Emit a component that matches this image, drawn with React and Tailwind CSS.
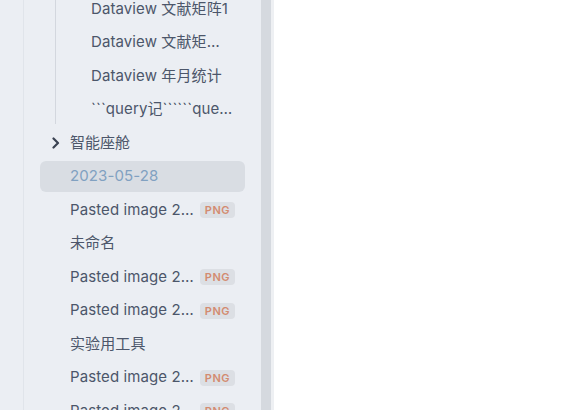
import React from "react";

const font = { fontFamily: "Inter, 'Noto Sans CJK SC', sans-serif" };

function Badge() {
  return (
    <span className="ml-[6px] shrink-0 rounded-[4px] bg-[#dcdfe4] px-[5px] text-[11px] font-semibold leading-[16px] tracking-[0.5px] text-[#d38b70]">
      PNG
    </span>
  );
}

function Row({ children, indent = "pl-[30px] pr-[10px]", selected = false, color = "text-[#4c566a]", badge = false }) {
  return (
    <div
      className={`flex h-[31px] items-center rounded-[6px] ${indent} ${selected ? "bg-[#d9dde3]" : ""}`}
    >
      <span className={`min-w-0 truncate text-[15px] tracking-[0.1px] ${color}`}>{children}</span>
      {badge && <Badge />}
    </div>
  );
}

export default function App() {
  return (
    <div className="flex h-[410px] w-[561px] overflow-hidden bg-white" style={font}>
      <div className="w-[24px] shrink-0 border-r border-[#e0e4ea] bg-[#ebeef3]" />
      <div className="relative w-[237px] shrink-0 bg-[#ebeef3] pl-[16px] pr-[16px]">
        <div className="-mt-[6.5px] flex flex-col gap-[2.5px]">
          <div className="relative flex flex-col gap-[2.5px]">
            <div className="absolute left-[15px] top-0 h-[130px] w-px bg-[#d3d7de]" />
            <Row indent="pl-[51px] pr-[12px]">Dataview 文献矩阵1</Row>
            <Row indent="pl-[51px] pr-[12px]">Dataview 文献矩阵2 示例</Row>
            <Row indent="pl-[51px] pr-[12px]">Dataview 年月统计</Row>
            <Row indent="pl-[51px] pr-[12px]">```query记``````query记录</Row>
          </div>
          <div className="flex h-[31px] items-center pl-[11px] pr-[10px]">
            <svg width="10" height="12" viewBox="0 0 10 12" className="mr-[9px] shrink-0">
              <path d="M2.5 1.5 L7 6 L2.5 10.5" fill="none" stroke="#3b4252" strokeWidth="2.2" strokeLinecap="round" strokeLinejoin="round" />
            </svg>
            <span className="truncate text-[15px] text-[#4c566a]">智能座舱</span>
          </div>
          <Row selected color="text-[#81a1c1]">2023-05-28</Row>
          <Row badge>Pasted image 20230528101010.png</Row>
          <Row>未命名</Row>
          <Row badge>Pasted image 20230528101011.png</Row>
          <Row badge>Pasted image 20230528101012.png</Row>
          <Row>实验用工具</Row>
          <Row badge>Pasted image 20230528101013.png</Row>
          <Row badge>Pasted image 20230528101014.png</Row>
        </div>
      </div>
      <div className="w-[10px] shrink-0 bg-[#d5d9df]" />
      <div className="w-[3px] shrink-0 bg-[#eef0f3]" />
      <div className="flex-1 bg-white" />
    </div>
  );
}
